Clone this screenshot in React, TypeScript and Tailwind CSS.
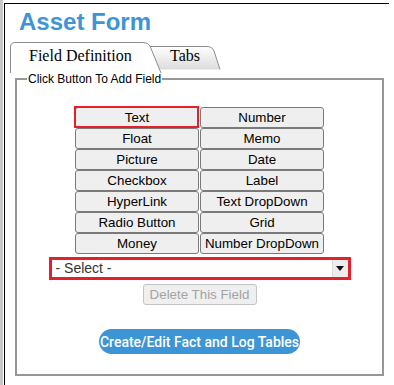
import React from "react";

const fieldButtons = [
  "Text",
  "Number",
  "Float",
  "Memo",
  "Picture",
  "Date",
  "Checkbox",
  "Label",
  "HyperLink",
  "Text DropDown",
  "Radio Button",
  "Grid",
  "Money",
  "Number DropDown",
];

function TabShapes() {
  return (
    <svg
      className="absolute left-0 top-0"
      width="214"
      height="31"
      viewBox="0 0 214 31"
      fill="none"
    >
      <defs>
        <linearGradient id="tabOff" x1="0" y1="0" x2="0" y2="1">
          <stop offset="0" stopColor="#ffffff" />
          <stop offset="1" stopColor="#dcdcdc" />
        </linearGradient>
      </defs>
      {/* inactive tab */}
      <path d="M140 27.5 L140 4.5 L197 4.5 Q202 4.5 204 9 L210 27.5 Z" fill="url(#tabOff)" />
      <path d="M140 4.5 L197 4.5 Q202 4.5 204 9 L210 27.5" stroke="#8c8c8c" />
      {/* active tab */}
      <path d="M0.5 31 L0.5 5 Q0.5 0.5 5 0.5 L133 0.5 Q138 0.5 140 4 L151 31 Z" fill="#ffffff" />
      <path d="M0.5 31 L0.5 5 Q0.5 0.5 5 0.5 L133 0.5 Q138 0.5 140 4 L151 31" stroke="#8c8c8c" />
    </svg>
  );
}

export default function App() {
  return (
    <div className="flex min-h-[385px] bg-white font-['Liberation_Sans',Arial,sans-serif]">
      <div className="w-[3px] shrink-0 bg-[#c8c8c8]" />
      <div className="ml-[1px] mt-[3px] w-[385px] border-l border-t border-black">
        {/* title */}
        <h1 className="pl-[14px] pt-[6px] text-[24px] font-bold leading-[24px] text-[#3d95d6]">
          Asset Form
        </h1>

        {/* tabs */}
        <div className="relative ml-[5px] mt-[8px] h-[30px] w-[214px]">
          <TabShapes />
          <div className="relative flex pt-[5px] font-['Liberation_Serif','Times_New_Roman',serif] text-[16px] leading-[18px] text-black">
            <span className="w-[160px] pl-[19px]">Field Definition</span>
            <span>Tabs</span>
          </div>
        </div>

        {/* tab panel */}
        <fieldset className="ml-[10px] w-[369px] border-2 border-[#969696] px-0 pb-[20px] pt-[21px]">
          <legend className="ml-[10px] px-[1px] text-[12px] leading-[14px] text-black">
            Click Button To Add Field
          </legend>

          <div className="flex flex-col items-center">
            <div className="grid grid-cols-[124px_124px] gap-x-[1px]">
              {fieldButtons.map((label, i) => (
                <button
                  key={label}
                  className="relative h-[21px] rounded-[3px] border border-[#7a7a7a] bg-[#efefef] text-[13.33px] leading-[15px] text-black"
                >
                  {label}
                  {/* selected field highlight */}
                  {i === 0 && (
                    <span className="pointer-events-none absolute -left-[2px] -top-[2px] -bottom-[1px] -right-[1px] border-2 border-[#e3202b]" />
                  )}
                </button>
              ))}
            </div>

            <div className="relative mt-[3px] h-[23px] w-[302px] overflow-hidden border-[3px] border-[#e3202b] bg-white">
              <select className="block h-[17px] w-full appearance-none bg-white pl-[4px] text-[14px] leading-[17px] text-[#333] outline-none">
                <option>- Select -</option>
              </select>
              <span className="pointer-events-none absolute right-0 top-0 flex h-[17px] w-[16px] items-center justify-center border-l border-[#dcdcdc] bg-[#ededed]">
                <svg width="8" height="5" viewBox="0 0 8 5">
                  <path d="M0 0 H8 L4 5 Z" fill="#111" />
                </svg>
              </span>
            </div>

            <button
              disabled
              className="mt-[4px] h-[21px] w-[114px] rounded-[3px] border border-[#c4c4c4] bg-[#efefef] text-[13.33px] leading-[15px] text-[#a3a3a3]"
            >
              Delete This Field
            </button>

            <button className="mt-[24px] h-[25px] w-[201px] rounded-full bg-[#3d95d5] font-['Roboto',sans-serif] text-[14px] font-medium leading-[16px] text-white">
              Create/Edit Fact and Log Tables
            </button>
          </div>
        </fieldset>
      </div>
    </div>
  );
}
